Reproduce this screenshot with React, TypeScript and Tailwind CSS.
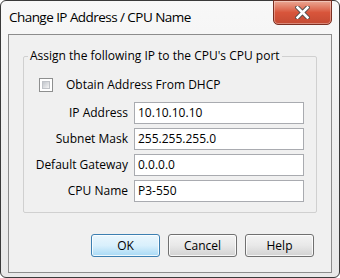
export default function App() {
  const rows: [string, string][] = [
    ["IP Address", "10.10.10.10"],
    ["Subnet Mask", "255.255.255.0"],
    ["Default Gateway", "0.0.0.0"],
    ["CPU Name", "P3-550"],
  ];
  return (
    <div
      className="w-[340px] h-[278px] bg-white text-black"
      style={{ fontFamily: '"Segoe UI", "Open Sans", "Noto Sans", sans-serif' }}
    >
      <div className="relative w-[340px] h-[278px] border border-[#3a3a3a] rounded-[6px] bg-gradient-to-b from-[#f8f8f8] via-[#efefef] to-[#e8e8e8] flex flex-col">
        {/* title bar */}
        <div className="h-[33px] flex items-center pl-[8px] pt-[1px] text-[13.5px] tracking-[-0.55px] leading-none text-black">
          Change IP Address / CPU Name
        </div>
        {/* close button */}
        <div className="absolute top-[-1px] right-[7px] w-[59px] h-[25px] rounded-b-[5px] border border-[#7a2f22] bg-gradient-to-b from-[#eaa794] via-[#d8553b] to-[#c44a33] flex items-center justify-center shadow-[inset_0_0_0_1px_rgba(255,255,255,0.35)]">
          <svg width="15" height="13" viewBox="0 0 15 13">
            <path d="M2.5 1.5 L12.5 11.5 M12.5 1.5 L2.5 11.5" stroke="#4a4a4a" strokeWidth="4.4" strokeLinecap="square" />
            <path d="M2.5 1.5 L12.5 11.5 M12.5 1.5 L2.5 11.5" stroke="#ffffff" strokeWidth="2.6" strokeLinecap="square" />
          </svg>
        </div>
        {/* client area */}
        <div className="mx-[7px] mb-[4px] flex-1 border border-[#8c8c8c] bg-[#f0f0f0] flex flex-col text-[12px]">
          <fieldset className="mt-[13px] ml-[14px] w-[294px] border border-[#d0d0d0] rounded-[2px] pb-[10px]">
            <legend className="ml-[4px] px-[2px] leading-[16px]">
              Assign the following IP to the CPU's CPU port
            </legend>
            <div className="pt-[13px] pl-[15px] flex items-center h-[29px]">
              <div className="w-[14px] h-[14px] border border-[#8e8f8f] bg-white p-[2px]">
                <div className="w-full h-full bg-gradient-to-br from-[#c2c6cc] to-[#f4f4f4] border border-[#c0c3c8]" />
              </div>
              <span className="ml-[13px] leading-[16px]">Obtain Address From DHCP</span>
            </div>
            <div className="mt-[9px] pl-[9px] grid grid-cols-[95px_170px] gap-x-[6px] gap-y-[4px]">
              {rows.map(([label, value]) => (
                <div key={label} className="contents">
                  <div className="h-[22px] flex items-center justify-end">{label}</div>
                  <div className="h-[22px] border border-[#a9abb0] bg-white flex items-center pl-[3px]">
                    {value}
                  </div>
                </div>
              ))}
            </div>
          </fieldset>
          <div className="mt-[21px] pr-[17px] flex justify-end gap-[8px]">
            <div className="w-[69px] h-[23px] rounded-[3px] border border-[#3c7fb1] bg-gradient-to-b from-[#eaf6fd] via-[#d9f0fc] to-[#a7d9f5] flex items-center justify-center shadow-[inset_0_0_0_1px_rgba(255,255,255,0.8)]">
              OK
            </div>
            <div className="w-[69px] h-[23px] rounded-[3px] border border-[#707070] bg-gradient-to-b from-[#f4f4f4] via-[#e8e8e8] to-[#d2d2d2] flex items-center justify-center shadow-[inset_0_0_0_1px_rgba(255,255,255,0.8)]">
              Cancel
            </div>
            <div className="w-[69px] h-[23px] rounded-[3px] border border-[#707070] bg-gradient-to-b from-[#f4f4f4] via-[#e8e8e8] to-[#d2d2d2] flex items-center justify-center shadow-[inset_0_0_0_1px_rgba(255,255,255,0.8)]">
              Help
            </div>
          </div>
        </div>
      </div>
    </div>
  );
}
